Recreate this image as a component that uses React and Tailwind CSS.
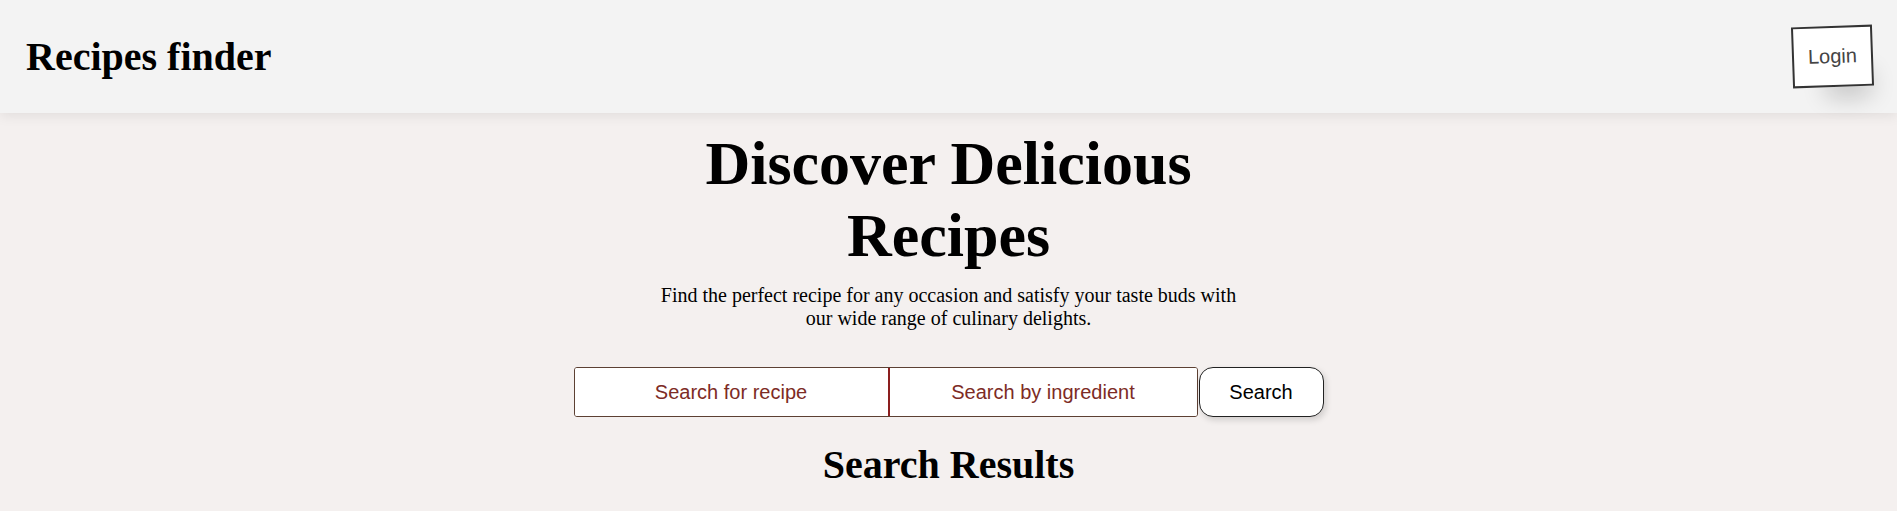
import React, { useState } from 'react';

const serif = { fontFamily: '"Liberation Serif", "Times New Roman", serif' };

const Header = () => (
  <header className="relative z-10 flex items-center justify-between h-[113px] pl-[26px] pr-[24px] bg-[#f3f3f3] shadow-[0_3px_12px_rgba(0,0,0,0.08)]">
    <h1 className="text-[40px] font-bold text-black leading-none" style={serif}>
      Recipes finder
    </h1>
    <button className="-rotate-2 bg-white border-2 border-[#333] px-[14px] py-[17px] text-[20px] leading-[23px] text-[#444] font-['Liberation_Sans',Arial,sans-serif] shadow-[15px_28px_25px_-18px_rgba(0,0,0,0.2)]">
      Login
    </button>
  </header>
);

const SearchForm = () => {
  const [recipe, setRecipe] = useState('');
  const [ingredient, setIngredient] = useState('');

  return (
    <form
      className="flex items-stretch justify-center gap-[1px] mt-[37px]"
      onSubmit={(e) => e.preventDefault()}
    >
      <div className="flex h-[50px] w-[624px] border border-[#5c4033] rounded-[3px] bg-white overflow-hidden">
        <input
          value={recipe}
          onChange={(e) => setRecipe(e.target.value)}
          placeholder="Search for recipe"
          className="w-[313px] h-full bg-white text-center text-[20px] outline-none text-[#7d2b25] placeholder:text-[#7d2b25] font-['Liberation_Sans',Arial,sans-serif]"
        />
        <div className="w-[2px] bg-[#8b1e1e]" />
        <input
          value={ingredient}
          onChange={(e) => setIngredient(e.target.value)}
          placeholder="Search by ingredient"
          className="flex-1 h-full bg-white text-center text-[20px] outline-none text-[#7d2b25] placeholder:text-[#7d2b25] font-['Liberation_Sans',Arial,sans-serif]"
        />
      </div>
      <button
        type="submit"
        className="w-[125px] h-[50px] bg-white border border-[#222] rounded-[14px] text-[20px] text-black font-['Liberation_Sans',Arial,sans-serif] shadow-[2px_3px_6px_rgba(0,0,0,0.15)]"
      >
        Search
      </button>
    </form>
  );
};

const App = () => {
  return (
    <div className="min-h-[511px] bg-[#f4f0ef]">
      <Header />
      <main className="flex flex-col items-center pt-[14px]" style={serif}>
        <div className="w-[595px] text-center">
          <h2 className="text-[62px] leading-[72px] font-bold text-black">
            Discover Delicious Recipes
          </h2>
          <p className="mt-[13px] text-[20px] leading-[23px] text-black">
            Find the perfect recipe for any occasion and satisfy your taste buds with our wide range of culinary delights.
          </p>
        </div>
        <SearchForm />
        <h2 className="mt-[25px] text-[40px] leading-[46px] font-bold text-black">
          Search Results
        </h2>
      </main>
    </div>
  );
};

export default App;
